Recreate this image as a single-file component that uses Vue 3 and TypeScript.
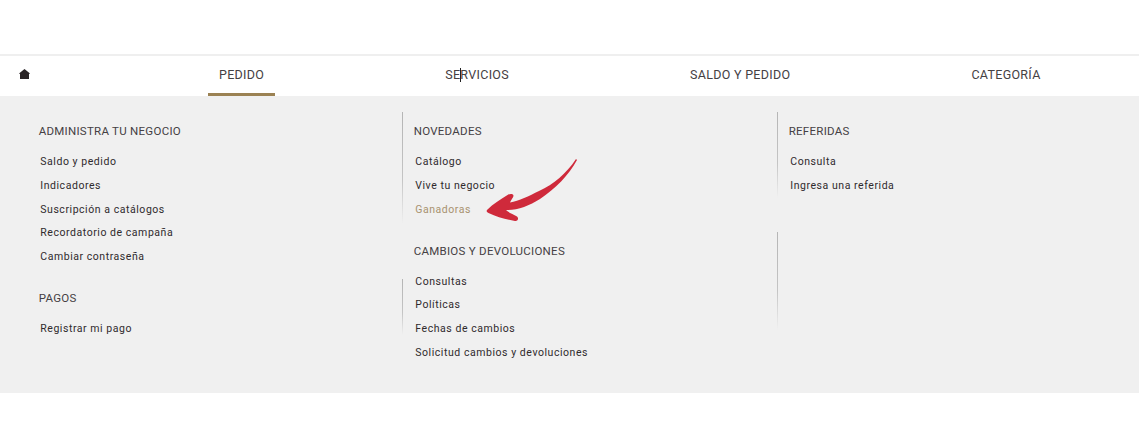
<template>
	<div class="page">
		<div class="top-space"></div>
		<nav class="main-nav">
			<svg class="home-icon" viewBox="0 0 11 10" width="11" height="10">
				<path d="M5.5 0 L11 4.6 L10 5 V10 H1 V5 L0 4.6 Z" fill="#2a2426" />
			</svg>
			<ul class="tabs">
				<li v-for="t in tabs" :key="t" class="tab" :class="{ active: t === 'PEDIDO' }">
					<span v-if="t === 'SERVICIOS'" class="caret-wrap">SE<i class="caret"></i>RVICIOS</span>
					<template v-else>{{ t }}</template>
				</li>
			</ul>
		</nav>
		<section class="panel">
			<div v-for="(col, i) in columns" :key="i" class="col">
				<span v-for="(l, j) in col.lines" :key="j" class="sep" :style="{ top: l.top + 'px', height: l.height + 'px' }"></span>
				<div v-for="g in col.groups" :key="g.title" class="group">
					<h4 class="group-title">{{ g.title }}</h4>
					<ul class="links">
						<li v-for="item in g.items" :key="item" class="link" :class="{ muted: item === 'Ganadoras' }">{{ item }}</li>
					</ul>
				</div>
			</div>
			<svg class="arrow" viewBox="0 0 110 80" width="110" height="80">
				<path
					d="M97 3 C87 18 75 28 60 35 C50 40 40 45 31 46.5 C32 44 34 42 34.5 40 C34.5 37.5 31 37.5 28.5 39 C21 44 14 48 8.5 53.5 C7 55 7.5 56 9.5 57 C18 61 27 63.5 36 65 C39 65.5 40 62 38 60.5 C34 58 30 57 27 54 C38 54.5 50 50 61 43 C76 33 90 19 98 4 Z"
					fill="#cf2a3b"
				/>
			</svg>
		</section>
		<div class="bottom-space"></div>
	</div>
</template>

<script setup lang="ts">
const tabs = ['PEDIDO', 'SERVICIOS', 'SALDO Y PEDIDO', 'CATEGORÍA']

const columns = [
	{
		lines: [],
		groups: [
			{
				title: 'ADMINISTRA TU NEGOCIO',
				items: ['Saldo y pedido', 'Indicadores', 'Suscripción a catálogos', 'Recordatorio de campaña', 'Cambiar contraseña'],
			},
			{ title: 'PAGOS', items: ['Registrar mi pago'] },
		],
	},
	{
		lines: [
			{ top: 16, height: 112 },
			{ top: 183, height: 56 },
		],
		groups: [
			{ title: 'NOVEDADES', items: ['Catálogo', 'Vive tu negocio', 'Ganadoras'] },
			{
				title: 'CAMBIOS Y DEVOLUCIONES',
				items: ['Consultas', 'Políticas', 'Fechas de cambios', 'Solicitud cambios y devoluciones'],
			},
		],
	},
	{
		lines: [
			{ top: 16, height: 86 },
			{ top: 136, height: 98 },
		],
		groups: [{ title: 'REFERIDAS', items: ['Consulta', 'Ingresa una referida'] }],
	},
]
</script>

<style scoped>
.page {
	width: 100%;
	font-family: Roboto, "Liberation Sans", sans-serif;
	background: #fff;
}

.top-space {
	height: 54px;
}

.main-nav {
	display: flex;
	align-items: center;
	height: 40px;
	padding-left: 19px;
	border-top: 2px solid #efefef;
}

.home-icon {
	flex-shrink: 0;
	margin-top: -5px;
}

.tabs {
	display: flex;
	gap: 159px;
	list-style: none;
	margin: 0 0 0 178px;
	padding: 0;
	height: 100%;
}

.tab {
	display: flex;
	align-items: center;
	padding: 0 11px;
	font-size: 12.5px;
	letter-spacing: 0.3px;
	color: #454043;
	white-space: nowrap;
	border-bottom: 3px solid transparent;
	box-sizing: border-box;
}

.tab.active {
	border-bottom-color: #9b8253;
}

.caret-wrap {
	position: relative;
}

.caret {
	display: inline-block;
	width: 1px;
	height: 14px;
	margin-right: -1px;
	vertical-align: -3px;
	background: #222;
}

.panel {
	position: relative;
	display: grid;
	grid-template-columns: 375px 375px 1fr;
	height: 297px;
	padding-left: 27px;
	background: #f0f0f0;
	box-sizing: border-box;
}

.col {
	position: relative;
	padding: 28px 0 0 11.7px;
}

.sep {
	position: absolute;
	left: 0;
	width: 1px;
	background: linear-gradient(to bottom, #b5b5b5, #c4c4c4 60%, rgba(200, 200, 200, 0));
}

.group + .group {
	margin-top: 22.4px;
}

.group-title {
	margin: 0;
	font-size: 11.5px;
	font-weight: 400;
	line-height: 14px;
	letter-spacing: 0.27px;
	color: #454043;
}

.links {
	list-style: none;
	margin: 12px 0 0;
	padding: 0 0 0 1.6px;
}

.link {
	height: 23.75px;
	line-height: 23.75px;
	font-size: 10.5px;
	letter-spacing: 0.55px;
	color: #2f2a2d;
	white-space: nowrap;
}

.link.muted {
	color: #a8926f;
}

.arrow {
	position: absolute;
	left: 479px;
	top: 60px;
}

.bottom-space {
	height: 29px;
}
</style>

<style>
body {
	background: #fff;
}
</style>
